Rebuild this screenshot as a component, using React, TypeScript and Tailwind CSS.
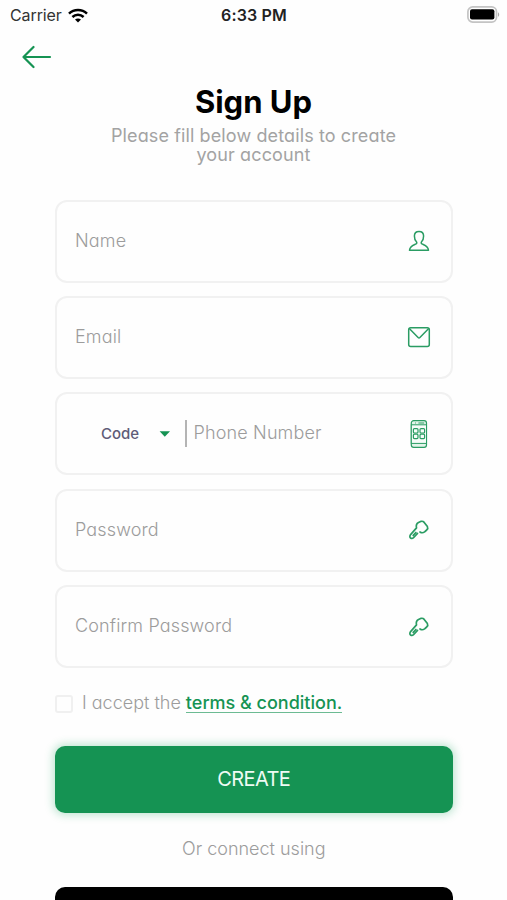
import React from "react";

const GREEN = "#2a9c63";

function WifiIcon() {
  return (
    <svg width="20" height="15" viewBox="0 0 20 15" fill="none" stroke="#000" strokeWidth="2.5">
      <path d="M1 5.6C6 .7 14 .7 19 5.6" />
      <path d="M4.4 9C7.6 6 12.4 6 15.6 9" />
      <path d="M10 14.4 7 11.5C8.7 10 11.3 10 13 11.5Z" fill="#000" stroke="none" />
    </svg>
  );
}

function BatteryIcon() {
  return (
    <svg width="33" height="17" viewBox="0 0 33 17">
      <rect x=".9" y=".9" width="28.6" height="15.2" rx="4.8" fill="#fff" stroke="#c4c4c4" strokeWidth="1.7" />
      <rect x="3" y="3.2" width="24.4" height="10.4" rx="2" fill="#000" />
      <path d="M31 6.2c1.6.7 1.6 3.9 0 4.6Z" fill="#aaa" />
    </svg>
  );
}

function BackIcon() {
  return (
    <svg width="30" height="24" viewBox="0 0 30 24" fill="none" stroke="#159353" strokeWidth="2.2" strokeLinecap="round" strokeLinejoin="round">
      <path d="M28 12H1.500M11.500 2 1.500 12l10 10" />
    </svg>
  );
}

function UserIcon() {
  return (
    <svg width="22" height="22" viewBox="0 0 22 22" fill="none" stroke={GREEN} strokeWidth="1.5" strokeLinejoin="round">
      <path d="M11 1.4c-2.800 0-4.600 1.800-4.600 4.700 0 2.400.8 4.500 2 5.600.6.600.5 1.800-.3 2.200-2.500 1.300-6.200 2.200-6.600 6.300h19c-.4-4.100-4.100-5-6.600-6.300-.8-.4-.9-1.600-.3-2.200 1.200-1.100 2-3.200 2-5.600 0-2.900-1.800-4.700-4.600-4.700Z" />
    </svg>
  );
}

function MailIcon() {
  return (
    <svg width="24" height="22" viewBox="0 0 24 22" fill="none" stroke={GREEN} strokeWidth="1.5" strokeLinejoin="round">
      <rect x="1.700" y="1.800" width="20.600" height="18.600" rx="2" />
      <path d="m2.300 2.500 8.800 9c.6.600 1.200.6 1.800 0l8.800-9" />
    </svg>
  );
}

function PhoneIcon() {
  return (
    <svg width="18" height="28" viewBox="0 0 18 28" fill="none" stroke={GREEN} strokeWidth="1.200">
      <rect x="1.300" y=".7" width="15.200" height="26.600" rx="2.400" fill="#e3f4ea" />
      <rect x="1.300" y="4.800" width="15.200" height="18.600" strokeWidth="1" fill="#f6fcf9" />
      <path d="M5 3h.8M8.400 3h5.800" />
      <rect x="3.400" y="8.600" width="4.600" height="4.400" rx="1" />
      <rect x="10" y="8.600" width="4.600" height="4.400" rx="1" />
      <rect x="3.400" y="14.200" width="4.600" height="4.400" rx="1" />
      <rect x="10" y="14.200" width="4.600" height="4.400" rx="1" />
    </svg>
  );
}

function KeyIcon() {
  return (
    <svg width="22" height="22" viewBox="0 0 22 22" fill="none" stroke={GREEN} strokeWidth="1.700" strokeLinecap="round" strokeLinejoin="round">
      <path d="M12 13c1.500 1 3.200.9 4.600-.1l2.100-1.900c1.300-1.300 1.400-2.100.7-3.400L16.200 3.400c-.9-1.100-1.800-1.300-3-1.100L10.500 3.600C8.700 4.600 7.900 6.500 8.500 8.900L2.600 15.600c-.9 1.200-1 2.900-.1 3.500.9.500 2.300.3 3-.4l4-4.300" />
      <path d="m5.200 16.300 2.700-2.800" />
    </svg>
  );
}

function Field({ label, icon, children }: { label: string; icon: React.ReactNode; children?: React.ReactNode }) {
  return (
    <div className="flex h-[83px] items-center rounded-[12px] border-2 border-[#f1f1f1] pl-[18.500px] pr-5">
      {children}
      <span className="flex-1 pb-[1px] text-[18px] font-light leading-6 tracking-[0.150px] text-[#9c9c9c]">{label}</span>
      <span className="flex w-6 justify-center">{icon}</span>
    </div>
  );
}

export default function App() {
  return (
    <div className="flex h-[900px] w-full flex-col overflow-hidden bg-[#fefefe] font-['Inter',sans-serif] [font-feature-settings:'cv11']">
      <header className="grid h-[30px] shrink-0 grid-cols-3 items-center pl-[10px] pr-[7px] text-[16px] leading-5 [font-feature-settings:normal]">
        <div className="flex items-center gap-[6px] text-[#333]">
          <span className="tracking-[-0.100px]">Carrier</span>
          <WifiIcon />
        </div>
        <span className="pr-[2px] text-center font-semibold tracking-[0.150px] text-[#222]">6:33 PM</span>
        <div className="flex justify-end pb-[2px]">
          <BatteryIcon />
        </div>
      </header>

      <div className="flex h-[54px] shrink-0 items-center pl-[22px]">
        <BackIcon />
      </div>

      <div className="flex shrink-0 flex-col items-center text-center">
        <h1 className="h-[42px] text-[31px] font-bold leading-[35px] text-black">Sign Up</h1>
        <p className="w-[300px] text-[18px] leading-[19px] tracking-[0.120px] text-[#a3a3a3]">
          Please fill below details to create your account
        </p>
      </div>

      <main className="flex shrink-0 flex-col pl-[54.500px] pr-[54px] pt-[35.500px]">
        <div className="flex flex-col gap-[13.400px]">
          <Field label="Name" icon={<UserIcon />} />
          <Field label="Email" icon={<MailIcon />} />
          <Field label="Phone Number" icon={<PhoneIcon />}>
            <div className="flex items-center pl-[26px] pr-[6.500px]">
              <span className="w-[58px] text-[15px] font-medium leading-5 text-[#5f5c78]">Code</span>
              <svg width="12" height="6" viewBox="0 0 12 6" fill="#159353">
                <path d="M.6.300h10.400L5.800 5.800Z" />
              </svg>
              <span className="ml-[14px] h-[27px] w-[2px] bg-[#b4b4b4]" />
            </div>
          </Field>
          <Field label="Password" icon={<KeyIcon />} />
          <Field label="Confirm Password" icon={<KeyIcon />} />
        </div>

        <div className="mt-[24px] flex items-center text-[18px] leading-[20px]">
          <span className="mt-[2px] size-[18px] rounded-[3px] border-2 border-[#f0f0f0]" />
          <span className="ml-[9.500px] font-light text-[#9c9c9c]">I accept the</span>
          <span className="ml-[5px] border-b border-[#6cbb93] pt-px font-medium leading-[19px] text-[#159353]">terms &amp; condition.</span>
        </div>

        <button className="mt-[33px] h-[67px] rounded-[10px] bg-[#159353] pb-[2px] text-[20px] leading-6 tracking-[-0.600px] text-[#eefbf4] shadow-[0_0_9px_2px_rgba(21,160,90,0.280)]">
          CREATE
        </button>
        <p className="mt-[23.500px] text-center text-[18px] font-light leading-6 text-[#9c9c9c]">Or connect using</p>
        <div className="mt-[26.500px] h-[67px] shrink-0 rounded-[10px] bg-black" />
      </main>
    </div>
  );
}
